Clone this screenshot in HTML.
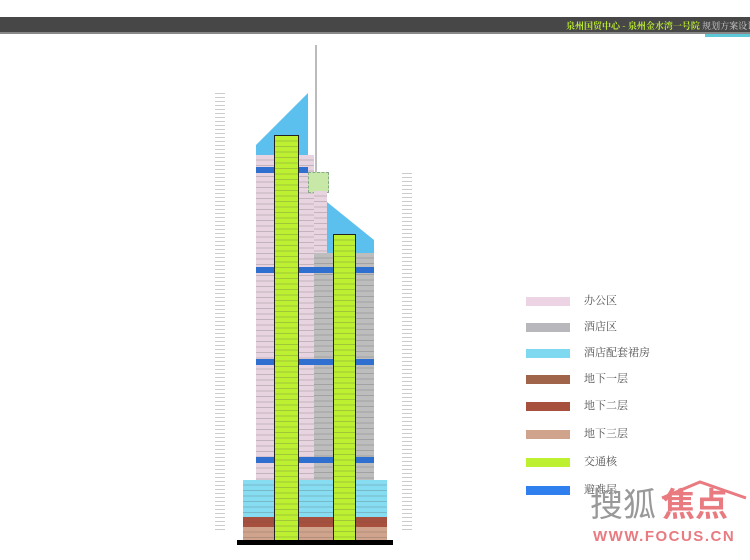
<!DOCTYPE html>
<html><head><meta charset="utf-8"><style>
body{margin:0;width:750px;height:560px;background:#fff;position:relative;overflow:hidden;font-family:"Liberation Serif","Noto Serif CJK SC",serif}
.a{position:absolute}
.fl{background-image:repeating-linear-gradient(to bottom,transparent 0,transparent 4.5px,rgba(80,80,80,.25) 4.5px,rgba(80,80,80,.25) 5.5px)}
.sw{position:absolute;left:526px;width:44px;height:9px}
.lt{position:absolute;left:584px;font-size:11px;color:#555;line-height:12px}
.tick{background-image:repeating-linear-gradient(to bottom,transparent 0,transparent 3px,#ccc 3px,#ccc 4px)}
</style></head><body>
<div class="a" style="left:0;top:17px;width:750px;height:15px;background:#474747"></div>
<div class="a" style="left:0;top:32px;width:750px;height:2px;background:#888"></div>
<div class="a" style="left:566px;top:19px;font-size:9px;font-weight:bold;color:#b8e830;white-space:nowrap;font-family:'Noto Serif CJK SC',serif">泉州国贸中心 - 泉州金水湾一号院 <span style="color:#ccc;font-weight:normal">规划方案设计</span></div>
<div class="a" style="left:705px;top:34px;width:45px;height:3px;background:#5cc8d8"></div>

<div class="a" style="left:315px;top:45px;width:2px;height:130px;background:#bbb"></div>
<div class="a tick" style="left:215px;top:90px;width:10px;height:440px"></div>
<div class="a tick" style="left:402px;top:170px;width:10px;height:360px"></div>

<svg class="a" style="left:0;top:0" width="750" height="560">
<polygon points="256,145 308,93 308,156 256,156" fill="#5cc0ee"/>
<polygon points="327,202 374,240 374,254 327,254" fill="#5cc0ee"/>
</svg>
<div class="a fl" style="left:256px;top:155px;width:58px;height:327px;background-color:#e8d4e0"></div>
<div class="a" style="left:308px;top:172px;width:19px;height:19px;background:#c8e8a8;border:1px dashed #8a8"></div>
<div class="a fl" style="left:314px;top:191px;width:13px;height:62px;background-color:#e8d4e0"></div>
<div class="a fl" style="left:314px;top:253px;width:60px;height:229px;background-color:#bdbdbd"></div>
<div class="a" style="left:256px;top:167px;width:52px;height:6px;background:#2f6fd0"></div>
<div class="a" style="left:256px;top:267px;width:118px;height:6px;background:#2f6fd0"></div>
<div class="a" style="left:256px;top:359px;width:118px;height:6px;background:#2f6fd0"></div>
<div class="a" style="left:256px;top:457px;width:118px;height:6px;background:#2f6fd0"></div>
<div class="a fl" style="left:243px;top:480px;width:144px;height:37px;background-color:#86dcf0"></div>
<div class="a fl" style="left:243px;top:517px;width:144px;height:10px;background-color:#a8503e"></div>
<div class="a fl" style="left:243px;top:527px;width:144px;height:13px;background-color:#d0a48c"></div>
<div class="a" style="left:237px;top:540px;width:156px;height:5px;background:#000"></div>
<div class="a fl" style="left:274px;top:136px;width:23px;height:404px;background-color:#bcf030;border-left:1px solid #222;border-right:1px solid #222"></div>
<div class="a fl" style="left:333px;top:235px;width:21px;height:305px;background-color:#bcf030;border-left:1px solid #222;border-right:1px solid #222"></div>
<div class="a" style="left:274px;top:135px;width:25px;height:1px;background:#222"></div>
<div class="a" style="left:333px;top:234px;width:23px;height:1px;background:#222"></div>

<div class="sw" style="top:297px;background:#ecd4e4"></div><div class="lt" style="top:295px">办公区</div>
<div class="sw" style="top:323px;background:#b8b8bc"></div><div class="lt" style="top:321px">酒店区</div>
<div class="sw" style="top:349px;background:#7ed8f0"></div><div class="lt" style="top:347px">酒店配套裙房</div>
<div class="sw" style="top:375px;background:#a0644a"></div><div class="lt" style="top:373px">地下一层</div>
<div class="sw" style="top:402px;background:#a8503e"></div><div class="lt" style="top:400px">地下二层</div>
<div class="sw" style="top:430px;background:#d0a48c"></div><div class="lt" style="top:428px">地下三层</div>
<div class="sw" style="top:458px;background:#bcf030"></div><div class="lt" style="top:456px">交通核</div>
<div class="sw" style="top:486px;background:#2f80ee"></div><div class="lt" style="top:484px">避难层</div>

<div class="a" style="left:590px;top:482px;font-size:33px;color:#999;font-family:'Noto Sans CJK SC',sans-serif;line-height:40px">搜狐</div>
<div class="a" style="left:662px;top:482px;font-size:33px;color:#e87a80;font-family:'Noto Sans CJK SC',sans-serif;line-height:40px;font-weight:bold">焦点</div>
<svg class="a" style="left:660px;top:480px" width="90" height="40"><polyline points="2,18 40,2 86,18" fill="none" stroke="#e87a80" stroke-width="3"/></svg>
<div class="a" style="left:593px;top:528px;font-size:15px;color:#e87a80;font-family:'Liberation Sans',sans-serif;font-weight:bold;letter-spacing:1.5px">WWW.FOCUS.CN</div>
</body></html>
